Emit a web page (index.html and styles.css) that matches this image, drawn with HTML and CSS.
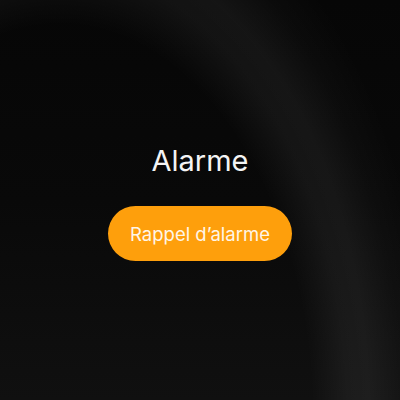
FILE: index.html
```html
<!DOCTYPE html>
<html lang="fr">
<head>
<meta charset="utf-8">
<link rel="stylesheet" href="styles.css">
</head>
<body>
<main class="screen">
  <h1 class="title">Alarme</h1>
  <button class="snooze">Rappel d’alarme</button>
</main>
</body>
</html>
```
FILE: styles.css
```css
html, body {
  margin: 0;
  padding: 0;
  width: 400px;
  height: 400px;
  overflow: hidden;
}
body {
  background: #080808;
  font-family: Inter, "Noto Sans", sans-serif;
}
.screen {
  width: 400px;
  height: 400px;
  box-sizing: border-box;
  display: flex;
  flex-direction: column;
  align-items: center;
  padding-top: 143px;
  background:
    radial-gradient(ellipse 300px 470px at 60px 420px,
      rgba(255,255,255,0) 0%,
      rgba(255,255,255,0) 84%,
      rgba(255,255,255,0.05) 96%,
      rgba(255,255,255,0.06) 103%,
      rgba(255,255,255,0.02) 114%,
      rgba(255,255,255,0) 125%),
    linear-gradient(to bottom, #060606 0%, #090909 50%, #101010 100%);
}
.title {
  margin: 0;
  font-weight: 400;
  font-size: 29px;
  line-height: 36px;
  color: #f4f4f4;
}
.snooze {
  margin-top: 27px;
  width: 184px;
  height: 55px;
  border: none;
  border-radius: 28px;
  background: #fe9f0c;
  color: #fff6e8;
  font-family: Inter, "Noto Sans", sans-serif;
  font-size: 18.5px;
  font-weight: 400;
  padding: 0;
}
```
